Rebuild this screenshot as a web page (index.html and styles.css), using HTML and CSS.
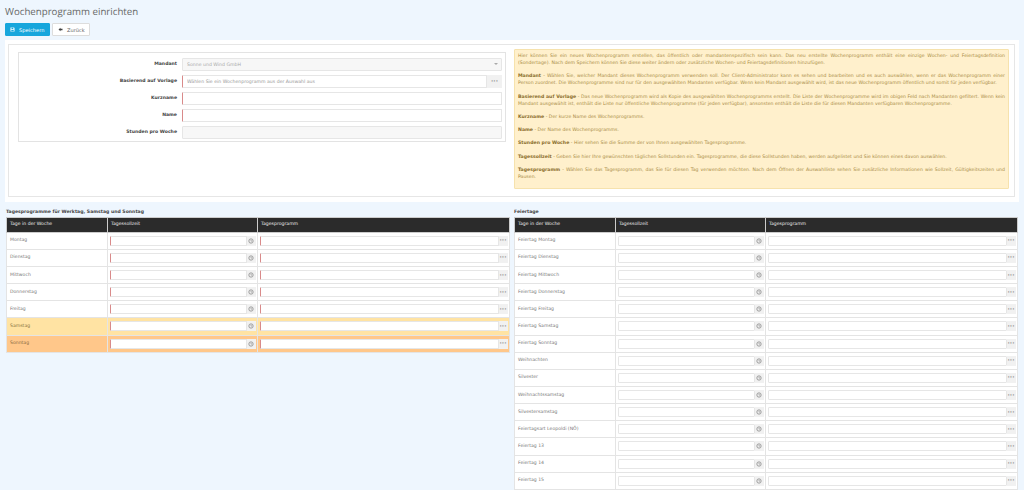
FILE: index.html
```html
<!DOCTYPE html>
<html lang="de">
<head>
    <meta charset="UTF-8">
    <title>Wochenprogramm einrichten</title>
    <link rel="stylesheet" href="styles.css">
</head>
<body>
    <h1>Wochenprogramm einrichten</h1>
    <div class="toolbar">
        <button class="btn btn-save"><svg class="btn-icon" viewBox="0 0 10 10"><path fill="#fff" d="M1 1h7l1 1v7H1z"/><path fill="#17a6dc" d="M3 1.6h3.6v2.2H3zM2.6 5.6h4.8V8.6H2.6z"/></svg>Speichern</button>
        <button class="btn btn-back"><svg class="btn-icon" viewBox="0 0 10 10"><path fill="#444" d="M5 1.5v2.2h4v2.6H5v2.2L1 5z"/></svg>Zurück</button>
    </div>

    <div class="panel">
        <div class="panel-inner">
            <div class="form-box">
                <div class="form-row">
                    <label>Mandant</label>
                    <div class="field select-field"><input class="input input-off" disabled value="Sonne und Wind GmbH"><span class="caret"></span></div>
                </div>
                <div class="form-row">
                    <label>Basierend auf Vorlage</label>
                    <div class="field"><input class="input input-req" placeholder="Wählen Sie ein Wochenprogramm aus der Auswahl aus"><span class="addon addon-form">···</span></div>
                </div>
                <div class="form-row">
                    <label>Kurzname</label>
                    <div class="field"><input class="input input-req"></div>
                </div>
                <div class="form-row">
                    <label>Name</label>
                    <div class="field"><input class="input input-req"></div>
                </div>
                <div class="form-row">
                    <label>Stunden pro Woche</label>
                    <div class="field"><input class="input input-off" disabled></div>
                </div>
            </div>
            <div class="help-box">
                <p>Hier können Sie ein neues Wochenprogramm erstellen, das öffentlich oder mandantenspezifisch sein kann. Das neu erstellte Wochenprogramm enthält eine einzige Wochen- und Feiertagsdefinition (Sondertage). Nach dem Speichern können Sie diese weiter ändern oder zusätzliche Wochen- und Feiertagsdefinitionen hinzufügen.</p>
                <p><b>Mandant</b> - Wählen Sie, welcher Mandant dieses Wochenprogramm verwenden soll. Der Client-Administrator kann es sehen und bearbeiten und es auch auswählen, wenn er das Wochenprogramm einer Person zuordnet. Die Wochenprogramme sind nur für den ausgewählten Mandanten verfügbar. Wenn kein Mandant ausgewählt wird, ist das neue Wochenprogramm öffentlich und somit für jeden verfügbar.</p>
                <p><b>Basierend auf Vorlage</b> - Das neue Wochenprogramm wird als Kopie des ausgewählten Wochenprogramms erstellt. Die Liste der Wochenprogramme wird im obigen Feld nach Mandanten gefiltert. Wenn kein Mandant ausgewählt ist, enthält die Liste nur öffentliche Wochenprogramme (für jeden verfügbar), ansonsten enthält die Liste die für diesen Mandanten verfügbaren Wochenprogramme.</p>
                <p><b>Kurzname</b> - Der kurze Name des Wochenprogramms.</p>
                <p><b>Name</b> - Der Name des Wochenprogramms.</p>
                <p><b>Stunden pro Woche</b> - Hier sehen Sie die Summe der von Ihnen ausgewählten Tagesprogramme.</p>
                <p><b>Tagessollzeit</b> - Geben Sie hier Ihre gewünschten täglichen Sollstunden ein. Tagesprogramme, die diese Sollstunden haben, werden aufgelistet und Sie können eines davon auswählen.</p>
                <p><b>Tagesprogramm</b> - Wählen Sie das Tagesprogramm, das Sie für diesen Tag verwenden möchten. Nach dem Öffnen der Auswahlliste sehen Sie zusätzliche Informationen wie Sollzeit, Gültigkeitszeiten und Pausen.</p>
            </div>
        </div>
    </div>

    <svg class="defs" width="0" height="0"><symbol id="uhr" viewBox="0 0 10 10"><circle cx="5" cy="5" r="3.6" fill="none" stroke="#888" stroke-width="1.3"/><path d="M5 3v2.2h1.8" fill="none" stroke="#888" stroke-width=".9"/></symbol></svg>

    <div class="tables">
        <section class="table-col">
            <h2>Tagesprogramme für Werktag, Samstag und Sonntag</h2>
            <table>
                <thead><tr><th>Tage in der Woche</th><th>Tagessollzeit</th><th>Tagesprogramm</th></tr></thead>
                <tbody>
                    <tr><td>Montag</td><td><div class="field"><input class="input input-req"><span class="addon"><svg class="clock"><use href="#uhr"/></svg></span></div></td><td><div class="field"><input class="input input-req"><span class="addon">···</span></div></td></tr>
                    <tr><td>Dienstag</td><td><div class="field"><input class="input input-req"><span class="addon"><svg class="clock"><use href="#uhr"/></svg></span></div></td><td><div class="field"><input class="input input-req"><span class="addon">···</span></div></td></tr>
                    <tr><td>Mittwoch</td><td><div class="field"><input class="input input-req"><span class="addon"><svg class="clock"><use href="#uhr"/></svg></span></div></td><td><div class="field"><input class="input input-req"><span class="addon">···</span></div></td></tr>
                    <tr><td>Donnerstag</td><td><div class="field"><input class="input input-req"><span class="addon"><svg class="clock"><use href="#uhr"/></svg></span></div></td><td><div class="field"><input class="input input-req"><span class="addon">···</span></div></td></tr>
                    <tr><td>Freitag</td><td><div class="field"><input class="input input-req"><span class="addon"><svg class="clock"><use href="#uhr"/></svg></span></div></td><td><div class="field"><input class="input input-req"><span class="addon">···</span></div></td></tr>
                    <tr class="row-sa"><td>Samstag</td><td><div class="field"><input class="input input-req"><span class="addon"><svg class="clock"><use href="#uhr"/></svg></span></div></td><td><div class="field"><input class="input input-req"><span class="addon">···</span></div></td></tr>
                    <tr class="row-so"><td>Sonntag</td><td><div class="field"><input class="input input-req"><span class="addon"><svg class="clock"><use href="#uhr"/></svg></span></div></td><td><div class="field"><input class="input input-req"><span class="addon">···</span></div></td></tr>
                </tbody>
            </table>
        </section>
        <section class="table-col">
            <h2>Feiertage</h2>
            <table>
                <thead><tr><th>Tage in der Woche</th><th>Tagessollzeit</th><th>Tagesprogramm</th></tr></thead>
                <tbody>
                    <tr><td>Feiertag Montag</td><td><div class="field"><input class="input"><span class="addon"><svg class="clock"><use href="#uhr"/></svg></span></div></td><td><div class="field"><input class="input"><span class="addon">···</span></div></td></tr>
                    <tr><td>Feiertag Dienstag</td><td><div class="field"><input class="input"><span class="addon"><svg class="clock"><use href="#uhr"/></svg></span></div></td><td><div class="field"><input class="input"><span class="addon">···</span></div></td></tr>
                    <tr><td>Feiertag Mittwoch</td><td><div class="field"><input class="input"><span class="addon"><svg class="clock"><use href="#uhr"/></svg></span></div></td><td><div class="field"><input class="input"><span class="addon">···</span></div></td></tr>
                    <tr><td>Feiertag Donnerstag</td><td><div class="field"><input class="input"><span class="addon"><svg class="clock"><use href="#uhr"/></svg></span></div></td><td><div class="field"><input class="input"><span class="addon">···</span></div></td></tr>
                    <tr><td>Feiertag Freitag</td><td><div class="field"><input class="input"><span class="addon"><svg class="clock"><use href="#uhr"/></svg></span></div></td><td><div class="field"><input class="input"><span class="addon">···</span></div></td></tr>
                    <tr><td>Feiertag Samstag</td><td><div class="field"><input class="input"><span class="addon"><svg class="clock"><use href="#uhr"/></svg></span></div></td><td><div class="field"><input class="input"><span class="addon">···</span></div></td></tr>
                    <tr><td>Feiertag Sonntag</td><td><div class="field"><input class="input"><span class="addon"><svg class="clock"><use href="#uhr"/></svg></span></div></td><td><div class="field"><input class="input"><span class="addon">···</span></div></td></tr>
                    <tr><td>Weihnachten</td><td><div class="field"><input class="input"><span class="addon"><svg class="clock"><use href="#uhr"/></svg></span></div></td><td><div class="field"><input class="input"><span class="addon">···</span></div></td></tr>
                    <tr><td>Silvester</td><td><div class="field"><input class="input"><span class="addon"><svg class="clock"><use href="#uhr"/></svg></span></div></td><td><div class="field"><input class="input"><span class="addon">···</span></div></td></tr>
                    <tr><td>Weihnachtssamstag</td><td><div class="field"><input class="input"><span class="addon"><svg class="clock"><use href="#uhr"/></svg></span></div></td><td><div class="field"><input class="input"><span class="addon">···</span></div></td></tr>
                    <tr><td>Silvestersamstag</td><td><div class="field"><input class="input"><span class="addon"><svg class="clock"><use href="#uhr"/></svg></span></div></td><td><div class="field"><input class="input"><span class="addon">···</span></div></td></tr>
                    <tr><td>Feiertagsart Leopoldi (NÖ)</td><td><div class="field"><input class="input"><span class="addon"><svg class="clock"><use href="#uhr"/></svg></span></div></td><td><div class="field"><input class="input"><span class="addon">···</span></div></td></tr>
                    <tr><td>Feiertag 13</td><td><div class="field"><input class="input"><span class="addon"><svg class="clock"><use href="#uhr"/></svg></span></div></td><td><div class="field"><input class="input"><span class="addon">···</span></div></td></tr>
                    <tr><td>Feiertag 14</td><td><div class="field"><input class="input"><span class="addon"><svg class="clock"><use href="#uhr"/></svg></span></div></td><td><div class="field"><input class="input"><span class="addon">···</span></div></td></tr>
                    <tr><td>Feiertag 15</td><td><div class="field"><input class="input"><span class="addon"><svg class="clock"><use href="#uhr"/></svg></span></div></td><td><div class="field"><input class="input"><span class="addon">···</span></div></td></tr>
                </tbody>
            </table>
        </section>
    </div>
</body>
</html>
```

FILE: styles.css
```css
html, body {
    height: 490px;
    overflow: hidden;
}
body {
    margin: 0;
    background: #eef6fe;
    font-family: "DejaVu Sans", sans-serif;
    font-size: 4.6px;
    color: #555;
    text-rendering: geometricPrecision;
}
h1 {
    margin: 0;
    padding: 5px 0 0 5px;
    height: 18px;
    box-sizing: border-box;
    font-family: "Open Sans", sans-serif;
    font-size: 9.7px;
    line-height: 13px;
    font-weight: 400;
    color: #666;
}
.toolbar {
    display: flex;
    gap: 2px;
    padding: 5px 0 4px 5px;
}
.btn {
    display: flex;
    align-items: center;
    height: 13px;
    padding: 0 4px;
    border-radius: 1px;
    font-family: "DejaVu Sans", sans-serif;
    font-size: 5.1px;
}
.btn-icon {
    width: 5px;
    height: 5px;
    margin-right: 4px;
}
.btn-save {
    width: 45px;
    background: #17a6dc;
    border: 1px solid #17a6dc;
    color: #fff;
}
.btn-back {
    width: 38px;
    padding-left: 5px;
    background: #fff;
    border: 1px solid #ddd;
    color: #666;
}
.panel {
    margin: 0 5px;
    height: 162px;
    box-sizing: border-box;
    padding: 4px 4px 5px 3px;
    background: #fff;
}
.panel-inner {
    display: flex;
    align-items: flex-start;
    height: 100%;
    box-sizing: border-box;
    padding: 4px 5px 0 9px;
    border: 1px solid #e6e6e6;
}
.form-box {
    width: 488px;
    height: 90px;
    box-sizing: border-box;
    margin-top: 3px;
    padding: 2.5px 3px 0 0;
    border: 1px solid #e3e3e3;
}
.form-row {
    display: flex;
    align-items: center;
    height: 17px;
}
.form-row label {
    width: 163px;
    flex: none;
    padding-right: 5px;
    text-align: right;
    font-weight: 700;
    color: #444;
    box-sizing: border-box;
}
.field {
    display: flex;
    flex: 1;
    min-width: 0;
    position: relative;
}
.input {
    flex: 1;
    min-width: 0;
    height: 13px;
    box-sizing: border-box;
    padding: 0 4px;
    border: 1px solid #e6e6e6;
    border-radius: 1px;
    background: #fff;
    font-family: "DejaVu Sans", sans-serif;
    font-size: 4.65px;
    color: #aaa;
    outline: none;
}
.input::placeholder {
    color: #999;
}
.input-off {
    background: #f7f7f7;
}
.input-req {
    border-left: 1px solid #d98a8a;
}
.caret {
    position: absolute;
    right: 4px;
    top: 5px;
    border: 2px solid transparent;
    border-top-color: #aaa;
}
.addon {
    display: flex;
    flex: none;
    align-items: center;
    justify-content: center;
    width: 9px;
    height: 13px;
    background: #f1f1f1;
    font-size: 6px;
    line-height: 9px;
    font-weight: 700;
    color: #888;
}
.addon-form {
    width: 15px;
}
.clock {
    width: 6px;
    height: 6px;
}
.defs {
    position: absolute;
}
.help-box {
    flex: 1;
    height: 140px;
    box-sizing: border-box;
    margin-left: 8px;
    padding: 3px 3px 0;
    background: #fff0cc;
    border: 1px solid #f6e2ad;
    border-radius: 1px;
    font-size: 4.65px;
    line-height: 7px;
    color: #a98c45;
}
.help-box p {
    margin: 0 0 6.3px;
    text-align: justify;
}
.help-box b {
    color: #8a6d2b;
}
.tables {
    display: flex;
    gap: 4px;
    padding: 7px 6px 0 6px;
}
.table-col {
    width: 504px;
    flex: none;
}
h2 {
    margin: 0;
    height: 8px;
    font-size: 4.6px;
    line-height: 8px;
    font-weight: 700;
    color: #444;
}
table {
    width: 100%;
    table-layout: fixed;
    border-collapse: collapse;
}
th:nth-child(1), td:nth-child(1) {
    width: 101px;
}
th:nth-child(2), td:nth-child(2) {
    width: 150px;
}
th {
    height: 14.7px;
    box-sizing: border-box;
    padding: 0 3px;
    background: #2b2b2b;
    border: 1px solid #ccc;
    text-align: left;
    font-weight: 400;
    color: #eee;
}
td {
    height: 17.15px;
    box-sizing: border-box;
    padding: 0 1.5px;
    background: #fff;
    border: 1px solid #e4e4e4;
    color: #777;
}
td:first-child {
    padding-left: 3px;
}
tbody .input {
    height: 10px;
}
tbody .addon {
    height: 10px;
    width: 9px;
}
.row-sa td {
    background: #ffe3a3;
    color: #8a7340;
}
.row-so td {
    background: #ffc78a;
    color: #8a6a40;
}
```
